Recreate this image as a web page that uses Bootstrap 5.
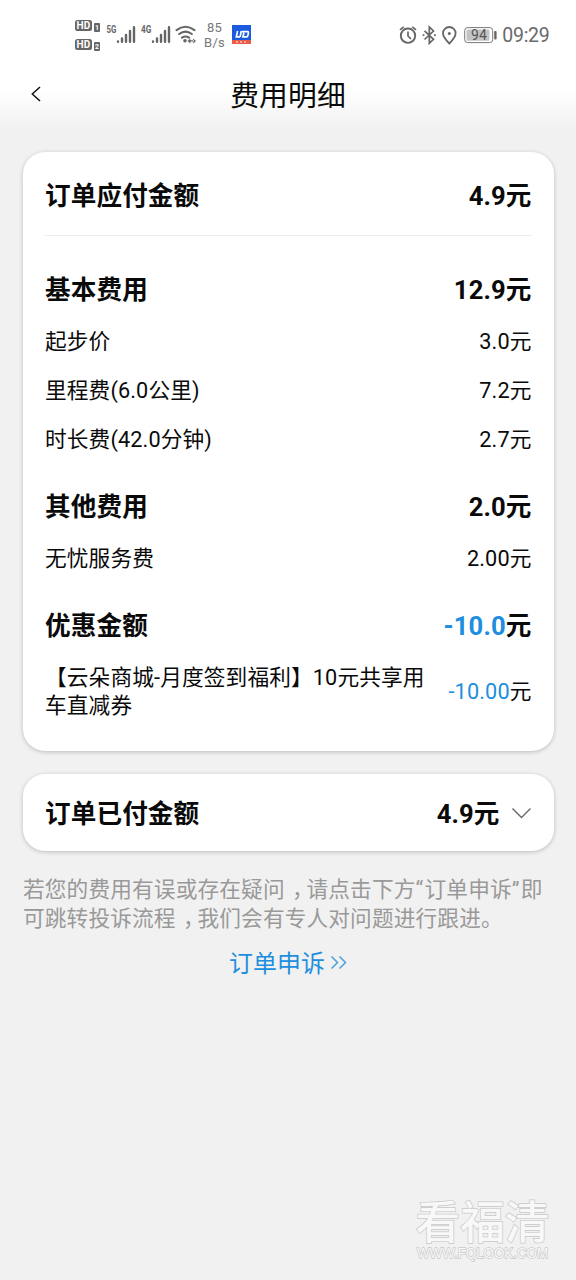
<!DOCTYPE html>
<html lang="zh-CN">
<head>
<meta charset="utf-8">
<meta name="viewport" content="width=device-width, initial-scale=1">
<title>费用明细</title>
<link rel="stylesheet" href="https://cdn.jsdelivr.net/npm/bootstrap@5.3.0/dist/css/bootstrap.min.css">
<style>
body{font-family:Roboto,"Noto Sans CJK SC",sans-serif;background:#f1f1f1;color:#0a0a0a;font-size:21.7px;line-height:28.5px;letter-spacing:.12px}
.screen{height:1280px;overflow:hidden}
.top-area{height:129px;background:linear-gradient(#fff 0,#fff 90px,#f1f1f1 129px)}
.status{height:69px}
.status svg{display:block}
.title-bar{height:53px}
.page-title{font-size:28.8px;font-weight:400;line-height:40px}
.panel{border:0;border-radius:22px;margin:0 22.5px;padding:0 22px 0 22.5px;box-shadow:0 1px 4px rgba(0,0,0,.22)}
.first-panel{margin-top:23px;height:599px}
.second-panel{margin-top:23px;height:77px}
.total{height:84px;padding-top:6px;border-bottom:1px solid #ededed;margin-bottom:25px}
.strong-row{font-size:25.6px;font-weight:700}
.group-head{height:55px;padding-top:4px}
.item{height:49px;padding-top:4px}
.item-tall{height:77px;padding-top:3px}
.paid-row{padding-top:3px}
.paid-row svg{margin-top:-3px}
.group{margin-bottom:15px}
.blue{color:#208ede}
.hint{margin:24px 20px 0 23px;color:#999;line-height:29px}
.comma{display:inline-block;width:21.8px;text-indent:.34em}
.quote{letter-spacing:1.3px}
.appeal{color:#208ede;font-size:23.9px;line-height:34px;margin-top:14px}
.stamp{right:22px;bottom:12px;width:142px;height:76px;overflow:visible}
</style>
</head>
<body>
<div class="screen position-relative">
  <header class="top-area">
    <div class="status d-flex justify-content-between">
      <svg width="270" height="69" fill="#666" font-family="Roboto, sans-serif">
        <g font-weight="700">
          <rect x="75" y="20" width="17" height="11" rx="2.5"/><rect x="75" y="39" width="17" height="11" rx="2.5"/>
          <rect x="94" y="23" width="6" height="9" rx="1"/><rect x="94" y="42" width="6" height="9" rx="1"/>
          <g fill="#fff" font-size="10"><text x="76.500" y="29.200">HD</text><text x="76.500" y="48.200">HD</text>
          <text x="95" y="30.200" font-size="7">1</text><text x="95" y="49.200" font-size="7">2</text></g>
          <text x="106.500" y="33.300" font-size="10.500" textLength="10" lengthAdjust="spacingAndGlyphs">5G</text>
          <text x="141" y="33.300" font-size="10.500" textLength="10.500" lengthAdjust="spacingAndGlyphs">4G</text>
        </g>
        <g stroke="#666" stroke-width="2.400" stroke-linecap="round">
          <path d="M118 41.500v.3M122 38.500v3.300M126 35v6.800M130 31v10.800M134 27.200v14.600M153 41.500v.3M157 38.500v3.300M161 35v6.800M165 31v10.800M169 27.200v14.600"/>
        </g>
        <g fill="none" stroke="#666" stroke-width="2.100" stroke-linecap="round">
          <path d="M176.500 30.200Q185.500 23.300 194.500 30.200M179.200 34Q185.500 29.300 191.800 34M182 37.700Q185.500 35.200 189 37.700"/>
        </g>
        <circle cx="185" cy="40.800" r="1.800"/><path d="M187.500 41l2.900-2.600v5.200zM196 41l-2.900-2.600v5.200zM190 40.300h4v1.300h-4z"/>
        <g fill="#777" font-size="13" letter-spacing=".3"><text x="207" y="32">85</text><text x="204" y="47">B/s</text></g>
        <rect x="232" y="25" width="19" height="19" fill="#1c5be0"/><rect x="232" y="40" width="19" height="4" fill="#ee5b45"/>
        <g fill="none" stroke="#fff" stroke-width="1.700"><path d="M237.600 31l-1.300 5.800h3.700M241.300 31l-1.200 5.800M242 31.600h5.500q1.200 0 .9 1.500l-.5 2.200q-.3 1.500-1.500 1.500h-3.500l1-4"/></g>
        <path d="M236 42h2M240 42h2M244 42h2" stroke="#fff" stroke-width="1.200"/>
      </svg>
      <svg width="190" height="69" viewBox="386 0 190 69" fill="none" stroke="#666" font-family="Roboto, sans-serif">
        <circle cx="408" cy="35.700" r="7.200" stroke-width="1.900"/>
        <path d="M408 31.500v4.500l3 3M400 29.800l3.800-3M416 29.800l-3.800-3" stroke-width="1.700"/>
        <path d="M424.500 30.800l9 8.500-4.200 4v-16.300l4.200 4-9 8.500" stroke-width="1.700"/>
        <path d="M422.600 35.200h1.800M434 35.200h1.800" stroke-width="1.800"/>
        <path d="M449.300 43.500q-6.300-6.200-6.300-10.200a6.300 6.300 0 0 1 12.600 0q0 4-6.300 10.200z" stroke-width="1.800"/>
        <circle cx="449.300" cy="33.500" r="1.500" fill="#666" stroke="none"/>
        <rect x="464.700" y="27.600" width="28" height="15" rx="3" stroke="#777" stroke-width="1"/>
        <rect x="466.500" y="29.400" width="23" height="11.400" rx="1" fill="#c4c4c4" stroke="none"/>
        <rect x="494.200" y="31" width="2.400" height="8.500" rx="1" fill="#666" stroke="none"/>
        <g fill="#555" stroke="none"><text x="471" y="40" font-size="14" textLength="16">94</text>
        <text x="502.300" y="42.200" font-size="19.500" fill="#6a6a6a" textLength="47.500">09:29</text></g>
      </svg>
    </div>
    <div class="title-bar position-relative d-flex align-items-center justify-content-center">
      <svg class="position-absolute start-0 top-0" width="60" height="53" fill="none" stroke="#111" stroke-width="1.500"><path d="M40 18L32.300 25L40 32"/></svg>
      <h1 class="page-title mb-0">费用明细</h1>
    </div>
  </header>

  <main>
    <section class="card panel first-panel">
      <div class="total strong-row d-flex align-items-center justify-content-between"><span>订单应付金额</span><span>4.9元</span></div>
      <div class="group">
        <div class="group-head strong-row d-flex align-items-center justify-content-between"><span>基本费用</span><span>12.9元</span></div>
        <div class="item d-flex align-items-center justify-content-between"><span>起步价</span><span>3.0元</span></div>
        <div class="item d-flex align-items-center justify-content-between"><span>里程费(6.0公里)</span><span>7.2元</span></div>
        <div class="item d-flex align-items-center justify-content-between"><span>时长费(42.0分钟)</span><span>2.7元</span></div>
      </div>
      <div class="group">
        <div class="group-head strong-row d-flex align-items-center justify-content-between"><span>其他费用</span><span>2.0元</span></div>
        <div class="item d-flex align-items-center justify-content-between"><span>无忧服务费</span><span>2.00元</span></div>
      </div>
      <div>
        <div class="group-head strong-row d-flex align-items-center justify-content-between"><span>优惠金额</span><span><span class="blue">-10.0</span>元</span></div>
        <div class="item-tall d-flex align-items-center justify-content-between"><span class="text-nowrap">【云朵商城-月度签到福利】10元共享用<br>车直减券</span><span class="text-nowrap"><span class="blue">-10.00</span>元</span></div>
      </div>
    </section>

    <section class="card panel second-panel paid-row flex-row align-items-center strong-row">
      <span class="me-auto">订单已付金额</span><span>4.9元</span>
      <svg class="ms-2" width="24" height="20" fill="none" stroke="#666" stroke-width="1.400"><path d="M4.500 5.500L13.500 14.500L22.500 5.500"/></svg>
    </section>

    <p class="hint text-nowrap mb-0">若您的费用有误或存在疑问<span class="comma">，</span>请点击下方<span class="quote">“</span>订单申诉<span class="quote">”</span>即<br>可跳转投诉流程<span class="comma">，</span>我们会有专人对问题进行跟进。</p>
    <div class="appeal d-flex justify-content-center align-items-center"><span>订单申诉</span>
      <svg class="ms-1" width="18" height="18" fill="none" stroke="#4aa0dc" stroke-width="1.500"><path d="M2.500 1.500L8.500 7.500L2.500 13.500M10.500 1.500L16.500 7.500L10.500 13.500"/></svg>
    </div>
  </main>

  <svg class="stamp position-absolute" fill="#f8f8f8" stroke="#c9c9c9" stroke-width="1.500" paint-order="stroke" letter-spacing="0">
    <text x="3.500" y="47" font-family="Noto Sans CJK SC, sans-serif" font-weight="500" font-size="45" textLength="134" lengthAdjust="spacingAndGlyphs">看福清</text>
    <text x="5" y="66" font-family="Liberation Sans, sans-serif" font-size="15" textLength="131" lengthAdjust="spacingAndGlyphs">WWW.FQLOOK.COM</text>
  </svg>
</div>
<script src="https://cdn.jsdelivr.net/npm/bootstrap@5.3.0/dist/js/bootstrap.bundle.min.js"></script>
</body>
</html>
